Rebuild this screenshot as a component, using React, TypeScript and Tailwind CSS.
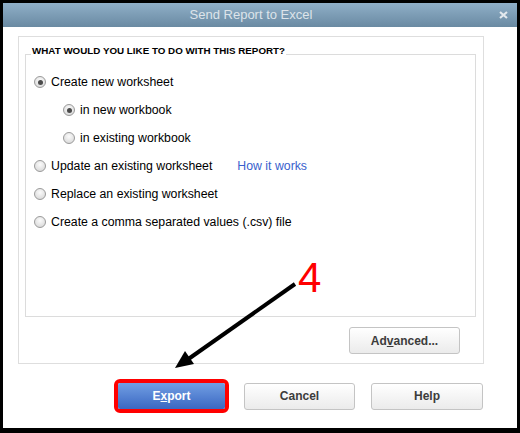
// Send Report to Excel dialog
const font = "font-['Liberation_Sans',Arial,sans-serif]"

type OptionType = {
  label: string
  checked?: boolean
  sub?: boolean
  link?: string
}

const options: OptionType[] = [
  { label: 'Create new worksheet', checked: true },
  { label: 'in new workbook', checked: true, sub: true },
  { label: 'in existing workbook', sub: true },
  { label: 'Update an existing worksheet', link: 'How it works' },
  { label: 'Replace an existing worksheet' },
  { label: 'Create a comma separated values (.csv) file' },
]

function Radio({ checked }: { checked?: boolean }) {
  return (
    <span className="flex h-[12px] w-[12px] shrink-0 items-center justify-center rounded-full border border-[#9a9a9a] bg-[radial-gradient(circle_at_50%_35%,#fbfbfb,#d3d3d3)]">
      {checked && <span className="h-[5px] w-[5px] rounded-full bg-[#4a4a4a]" />}
    </span>
  )
}

function Option({ label, checked, sub, link }: OptionType) {
  return (
    <div className={`flex h-[28px] items-center gap-[5px] ${sub ? 'pl-[37px]' : 'pl-[8px]'}`}>
      <Radio checked={checked} />
      <span className="text-[12.3px] text-black">{label}</span>
      {link && <span className="ml-[20px] text-[12.3px] text-[#3a5fcd]">{link}</span>}
    </div>
  )
}

function Button({ children, width }: { children: React.ReactNode; width: string }) {
  return (
    <div
      className={`flex h-[27px] ${width} items-center justify-center rounded-[3px] border border-[#c4c4c4] bg-gradient-to-b from-white to-[#ebebeb] text-[12px] font-bold text-[#3c3c3c]`}
    >
      {children}
    </div>
  )
}

export default function App() {
  return (
    <div className={`relative h-[433px] w-[520px] bg-black px-[3px] pt-[3px] pb-[5px] ${font}`}>
      <div className="flex h-full flex-col bg-white">
        {/* Title bar */}
        <div className="flex h-[24px] shrink-0 items-center bg-gradient-to-b from-[#8fafc8] to-[#6a8aa2]">
          <div className="flex-1 text-center text-[13px] text-[#dde4ea]">Send Report to Excel</div>
          <div className="flex w-[18px] justify-start">
            <svg width="9" height="8" viewBox="0 0 9 8">
              <path d="M1 1 L8 7 M8 1 L1 7" stroke="#e2e8ed" strokeWidth="2.2" />
            </svg>
          </div>
        </div>

        {/* Body */}
        <div className="flex flex-col pl-[15px] pt-[9px]">
          <div className="flex h-[328px] w-[466px] flex-col border border-[#dedede] pt-[8px]">
            <fieldset className="ml-[6px] h-[272px] w-[451px] border border-[#dcdcdc] px-0 pt-[4px]">
              <legend className="ml-[5px] px-[1px] pb-[7px] text-[9.8px] leading-[12px] font-bold text-black">
                WHAT WOULD YOU LIKE TO DO WITH THIS REPORT?
              </legend>
              {options.map((o) => (
                <Option key={o.label} {...o} />
              ))}
            </fieldset>
            <div className="mt-[10px] flex justify-end pr-[23px]">
              <Button width="w-[111px]">
                <span>
                  Ad<span className="underline">v</span>anced...
                </span>
              </Button>
            </div>
          </div>

          {/* Footer buttons */}
          <div className="mt-[15px] flex h-[34px] w-[466px] items-center justify-end gap-[15px] pr-[1px]">
            <div className="flex h-[34px] w-[115px] rounded-[6px] border-[4px] border-[#ff0000]">
              <div className="flex flex-1 items-center justify-center rounded-[2px] bg-gradient-to-b from-[#729fe3] to-[#3b67c2] text-[12px] font-bold text-white">
                <span>
                  E<span className="underline">x</span>port
                </span>
              </div>
            </div>
            <Button width="w-[111px]">Cancel</Button>
            <div className="ml-[1px]">
              <Button width="w-[112px]">Help</Button>
            </div>
          </div>
        </div>
      </div>

      {/* Annotation overlay */}
      <svg className="pointer-events-none absolute left-0 top-0" width="520" height="433" viewBox="0 0 520 433">
        <line x1="295" y1="284" x2="187" y2="360" stroke="black" strokeWidth="4" />
        <polygon points="175,368 194,364 185,351" fill="black" />
        <text x="298" y="292" fontSize="42" fill="#ff0000" fontFamily="Liberation Sans, Arial, sans-serif">
          4
        </text>
      </svg>
    </div>
  )
}
